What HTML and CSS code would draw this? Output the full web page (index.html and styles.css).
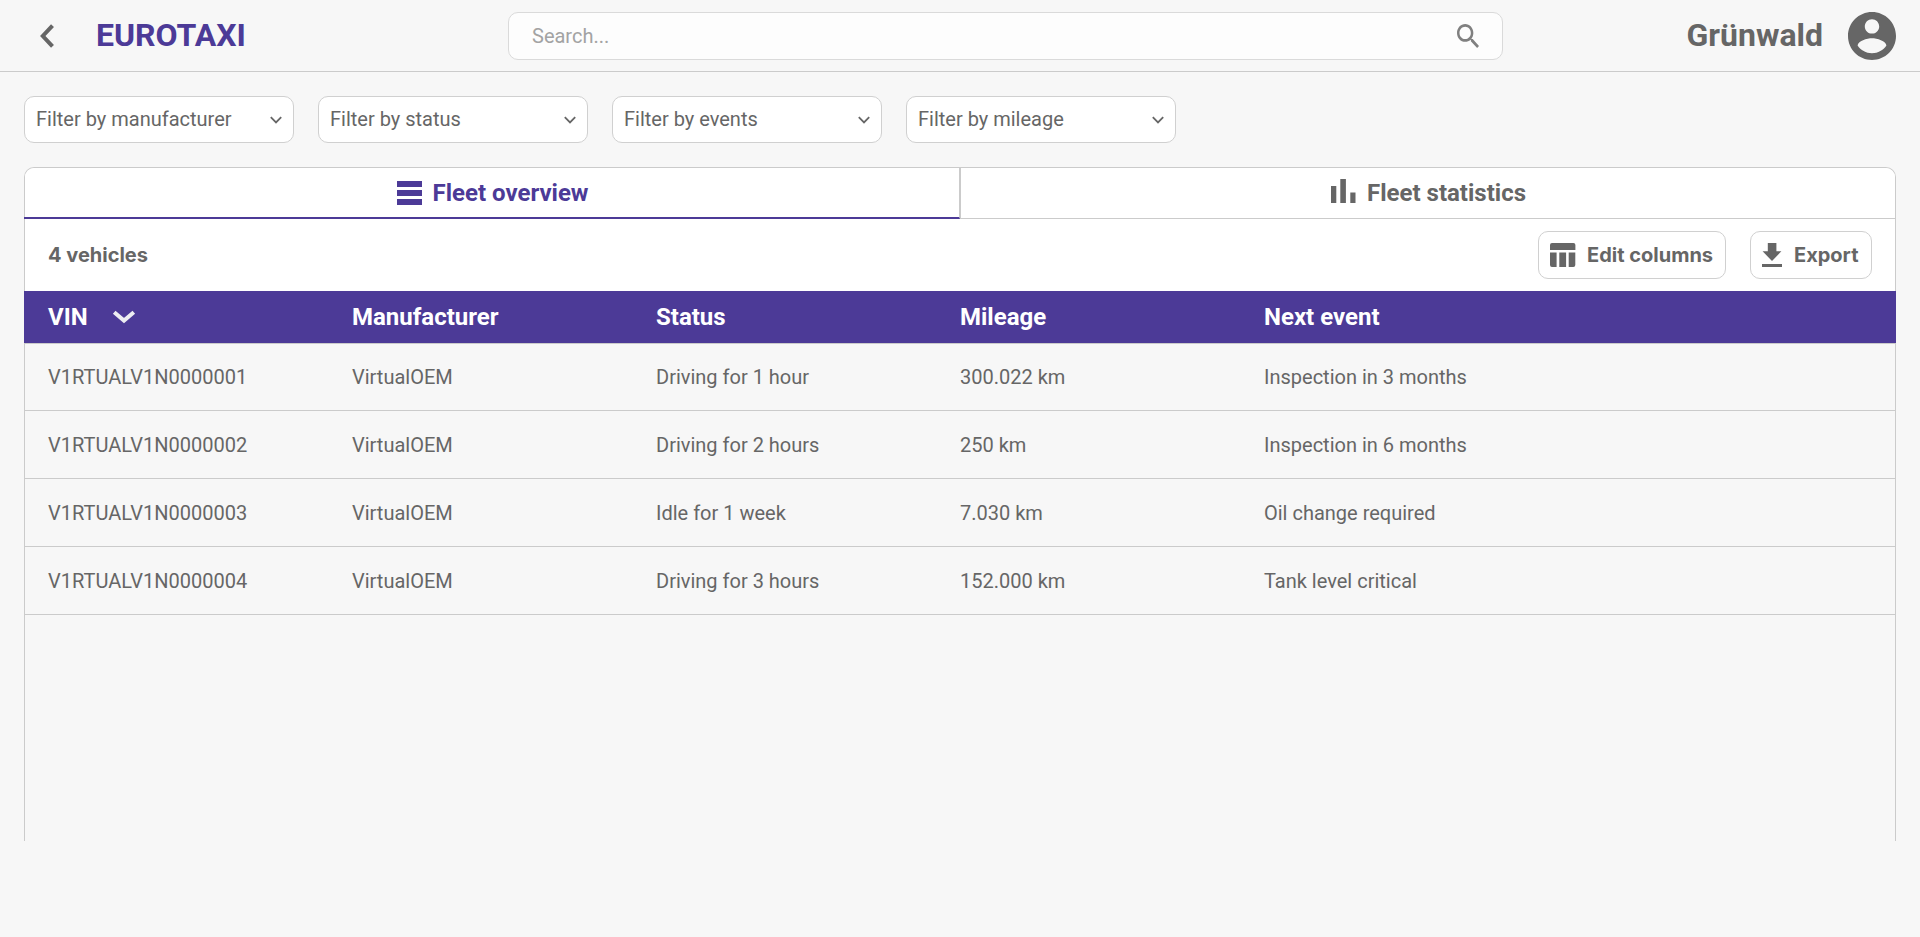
FILE: index.html
```html
<!DOCTYPE html>
<html lang="en">
<head>
<meta charset="utf-8">
<title>EUROTAXI</title>
<link rel="stylesheet" href="styles.css">
</head>
<body>
<header class="topbar">
  <div class="brand">
    <svg class="back" viewBox="0 0 14 24"><path d="M12.5 1.6 2.8 12l9.7 10.4" fill="none" stroke="currentColor" stroke-width="4"/></svg>
    <h1 class="brand-name">EUROTAXI</h1>
  </div>
  <label class="search">
    <input class="search-input" type="text" placeholder="Search...">
    <svg class="search-icon" viewBox="3 3 17.49 17.49" preserveAspectRatio="none"><path fill="currentColor" d="M15.5 14h-.79l-.28-.27C15.41 12.59 16 11.11 16 9.5 16 5.91 13.09 3 9.5 3S3 5.91 3 9.5 5.91 16 9.5 16c1.61 0 3.09-.59 4.23-1.57l.27.28v.79l5 4.99L20.49 19l-4.99-5zm-6 0C7.01 14 5 11.99 5 9.5S7.01 5 9.5 5 14 7.01 14 9.5 11.99 14 9.5 14z"/></svg>
  </label>
  <div class="user">
    <span class="user-name">Grünwald</span>
    <svg class="avatar" viewBox="2 2 20 20"><path fill="currentColor" d="M12 2C6.48 2 2 6.48 2 12s4.48 10 10 10 10-4.48 10-10S17.52 2 12 2zm0 3c1.66 0 3 1.34 3 3s-1.34 3-3 3-3-1.34-3-3 1.34-3 3-3zm0 14.2c-2.5 0-4.71-1.28-6-3.22.03-1.99 4-3.08 6-3.08 1.99 0 5.97 1.09 6 3.08-1.29 1.94-3.5 3.22-6 3.22z"/></svg>
  </div>
</header>

<div class="filters">
  <div class="filter"><span>Filter by manufacturer</span><svg class="caret" viewBox="0 0 12 8"><path d="M.8 1.200 6 6.500l5.200-5.300"/></svg></div>
  <div class="filter"><span>Filter by status</span><svg class="caret" viewBox="0 0 12 8"><path d="M.8 1.200 6 6.500l5.200-5.300"/></svg></div>
  <div class="filter"><span>Filter by events</span><svg class="caret" viewBox="0 0 12 8"><path d="M.8 1.200 6 6.500l5.200-5.300"/></svg></div>
  <div class="filter"><span>Filter by mileage</span><svg class="caret" viewBox="0 0 12 8"><path d="M.8 1.200 6 6.500l5.200-5.300"/></svg></div>
</div>

<main class="panel">
  <nav class="tabs">
    <div class="tab tab-active">
      <svg class="tab-icon" viewBox="0 0 25 24"><path fill="currentColor" d="M0 0h25v6H0zM0 9h25v6H0zM0 18h25v6H0z"/></svg>
      <span>Fleet overview</span>
    </div>
    <div class="tab">
      <svg class="tab-icon tab-icon-stats" viewBox="0 0 25 24"><path fill="currentColor" d="M0 7h5.300v17H0zM9.300 0h5.600v24H9.300zM19.300 13.400h5.200V24h-5.200z"/></svg>
      <span>Fleet statistics</span>
    </div>
  </nav>
  <div class="toolbar">
    <span class="count">4 vehicles</span>
    <div class="actions">
      <button class="button" type="button">
        <svg class="icon-columns" viewBox="0 0 25 24"><path fill="currentColor" d="M2 0h21.400a2 2 0 0 1 2 2v5H0V2a2 2 0 0 1 2-2zM0 9.500h6.600V24H2a2 2 0 0 1-2-2zM9.300 9.500h6.800V24H9.300zM18.700 9.500h6.600V22a2 2 0 0 1-2 2h-4.600z"/></svg>
        <span>Edit columns</span>
      </button>
      <button class="button button-export" type="button">
        <svg class="icon-export" viewBox="0 0 20 24"><path fill="currentColor" d="M5.800 0h8.600v8.300h5L10 18 .6 8.300h5.200zM0 21h20v3H0z"/></svg>
        <span>Export</span>
      </button>
    </div>
  </div>
  <div class="row head">
    <div class="vin-head"><span>VIN</span><svg class="sort" viewBox="0 0 24 14"><path d="M2.200 2.200 12 10.600l9.800-8.400"/></svg></div>
    <div>Manufacturer</div><div>Status</div><div>Mileage</div><div>Next event</div>
  </div>
  <div class="row first"><div>V1RTUALV1N0000001</div><div>VirtualOEM</div><div>Driving for 1 hour</div><div>300.022 km</div><div>Inspection in 3 months</div></div>
  <div class="row"><div>V1RTUALV1N0000002</div><div>VirtualOEM</div><div>Driving for 2 hours</div><div>250 km</div><div>Inspection in 6 months</div></div>
  <div class="row"><div>V1RTUALV1N0000003</div><div>VirtualOEM</div><div>Idle for 1 week</div><div>7.030 km</div><div>Oil change required</div></div>
  <div class="row"><div>V1RTUALV1N0000004</div><div>VirtualOEM</div><div>Driving for 3 hours</div><div>152.000 km</div><div>Tank level critical</div></div>
</main>
</body>
</html>
```
FILE: styles.css
```css
* { box-sizing: border-box; }

body {
  margin: 0;
  background: #f7f7f7;
  color: #666;
  font-family: Roboto, sans-serif;
  font-size: 20px;
}

svg { display: block; flex: none; }

.topbar {
  display: grid;
  grid-template-columns: 468px 995px 1fr;
  align-items: center;
  height: 72px;
  padding: 0 24px 0 40px;
  border-bottom: 1px solid #cbcbcb;
}

.brand { display: flex; align-items: center; }
.back { width: 14px; height: 24px; margin-right: 42px; }
.brand-name { margin: 0; padding-bottom: 1px; color: #4c3a97; font-size: 32px; font-weight: 700; line-height: 36px; }

.search {
  display: flex;
  align-items: center;
  justify-content: space-between;
  height: 48px;
  padding: 0 23px;
  background: #fdfdfd;
  border: 1px solid #dadada;
  border-radius: 10px;
}
.search-input {
  flex: 1;
  padding: 0;
  border: 0;
  outline: 0;
  background: transparent;
  color: #666;
  font: 400 20px Roboto, sans-serif;
}
.search-input::placeholder { color: #a3a3a3; opacity: 1; }
.search-icon { width: 22px; height: 24px; color: #808080; }

.user { display: flex; align-items: center; justify-content: flex-end; gap: 25px; }
.user-name { padding-bottom: 1px; font-size: 32px; font-weight: 700; line-height: 36px; }
.avatar { width: 48px; height: 48px; }

.filters { display: flex; gap: 24px; padding: 24px 24px 0; }
.filter {
  display: flex;
  align-items: center;
  justify-content: space-between;
  width: 270px;
  height: 47px;
  padding: 0 11px;
  background: #fff;
  border: 1px solid #d0d0d0;
  border-radius: 10px;
}
.filter span { line-height: 24px; padding-bottom: 1px; }
.caret { width: 12px; height: 8px; fill: none; stroke: currentColor; stroke-width: 1.8; }

.panel {
  height: 674px;
  margin: 24px 24px 0;
  border: 1px solid #cbcbcb;
  border-bottom: 0;
  border-radius: 10px 10px 0 0;
}

.tabs { display: grid; grid-template-columns: 1fr 1fr; height: 51px; background: #fff; border-radius: 9px 9px 0 0; }
.tab {
  display: flex;
  align-items: center;
  justify-content: center;
  gap: 11px;
  padding-bottom: 1px;
  padding-left: 1px;
  border-bottom: 1px solid #cbcbcb;
  border-left: 1px solid #cbcbcb;
  font-size: 24px;
  font-weight: 700;
}
.tab-active {
  margin-left: -1px;
  padding-bottom: 0;
  padding-left: 2px;
  border-left: 0;
  border-right: 1px solid #cbcbcb;
  border-bottom: 2px solid #4c3a97;
  border-radius: 9px 0 0 0;
  color: #4c3a97;
}
.tab-icon { width: 25px; height: 24px; }
.tab-icon-stats { margin-bottom: 3px; }

.toolbar {
  display: flex;
  align-items: center;
  justify-content: space-between;
  height: 72px;
  padding: 0 23px;
  background: #fff;
  font-family: Inter, sans-serif;
  font-weight: 700;
}
.actions { display: flex; gap: 24px; }
.button {
  display: flex;
  align-items: center;
  gap: 12px;
  width: 188px;
  height: 48px;
  padding: 0 11px;
  background: #fff;
  border: 1px solid #d0d0d0;
  border-radius: 10px;
  color: #666;
  font: 700 20px Inter, sans-serif;
  white-space: nowrap;
}
.button-export { width: 122px; }
.icon-columns { width: 25px; height: 24px; overflow: visible; }
.icon-export { width: 20px; height: 24px; }

.row {
  display: grid;
  grid-template-columns: 304px 304px 304px 304px 1fr;
  align-items: center;
  height: 68px;
  padding: 0 23px;
  border-bottom: 1px solid #cbcbcb;
}
.head {
  height: 52px;
  margin: 0 -1px;
  padding: 0 24px;
  border-bottom: 0;
  background: #4c3a97;
  color: #fff;
  font-size: 24px;
  font-weight: 700;
}
.first { border-top: 1px solid #cbcbcb; }
.vin-head { display: flex; align-items: center; gap: 24px; }
.sort { width: 24px; height: 14px; fill: none; stroke: #ededf2; stroke-width: 4; }
```
